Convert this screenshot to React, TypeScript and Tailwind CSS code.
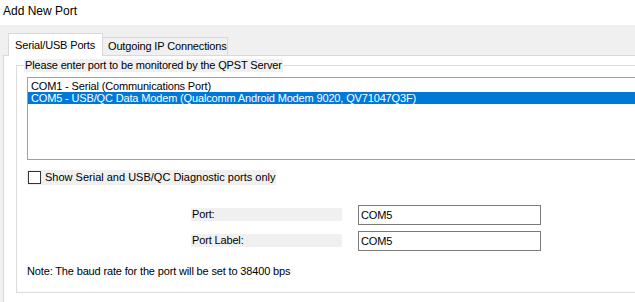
import React from "react";

export default function App() {
  const font = { fontFamily: '"Liberation Sans", Arial, sans-serif' };
  return (
    <div
      className="w-[635px] h-[302px] overflow-hidden bg-white flex flex-col text-black text-[11px] leading-[13px] tracking-[-0.15px]"
      style={font}
    >
      <div className="h-[25px] shrink-0 pl-[3px] pt-[4px] text-[12px] leading-[15px] tracking-normal">Add New Port</div>
      <div className="flex-1 bg-[#f0f0f0] pl-[3px] flex flex-col">
        <div className="h-[30px] shrink-0 flex items-end pl-[5px]">
          <div className="relative z-10 -mb-px h-[23px] w-[95px] bg-white border border-b-0 border-[#d9d9d9] pl-[6px] pt-[5px] whitespace-nowrap">
            Serial/USB Ports
          </div>
          <div className="h-[18px] w-[126px] -ml-px bg-[#f0f0f0] border border-b-0 border-[#d9d9d9] pl-[5px] pt-[2px] whitespace-nowrap">
            Outgoing IP Connections
          </div>
        </div>
        <div className="flex-1 bg-white border-l border-t border-[#d9d9d9] pl-[12px] pt-[9px]">
          <div className="relative w-[700px] border border-[#dcdcdc] pl-[10px] pt-[11px] pb-[14px]">
            <div className="absolute -top-[7px] left-[7px] bg-[#f0f0f0] pl-[1px] pr-[1px] leading-[13px] whitespace-nowrap">
              Please enter port to be monitored by the QPST Server
            </div>
            <div className="w-[640px] h-[83px] border border-[#a0a0a0] bg-white pt-[2px]">
              <div className="h-[12px] leading-[12px] pl-[3px] whitespace-nowrap">COM1 - Serial (Communications Port)</div>
              <div className="h-[12px] leading-[12px] pl-[3px] bg-[#0078d7] text-white whitespace-nowrap">
                COM5 - USB/QC Data Modem (Qualcomm Android Modem 9020, QV71047Q3F)
              </div>
            </div>
            <div className="mt-[10px] w-[249px] h-[15px] bg-[#f0f0f0] flex items-center">
              <div className="ml-[1px] w-[13px] h-[13px] border border-[#333333] bg-white shrink-0" />
              <span className="ml-[4px] leading-[13px] tracking-normal whitespace-nowrap">Show Serial and USB/QC Diagnostic ports only</span>
            </div>
            <div className="mt-[20px] ml-[164px] flex flex-col gap-[6px]">
              <div className="flex items-center h-[20px]">
                <div className="w-[151px] h-[13px] bg-[#f0f0f0] pl-[1px] leading-[13px] -mt-[1px]">Port:</div>
                <div className="ml-[16px] w-[183px] h-[20px] border border-[#7a7a7a] bg-white pl-[2px] pt-[3px] leading-[13px]">
                  COM5
                </div>
              </div>
              <div className="flex items-center h-[20px]">
                <div className="w-[151px] h-[13px] bg-[#f0f0f0] pl-[1px] leading-[13px] -mt-[1px]">Port Label:</div>
                <div className="ml-[16px] w-[183px] h-[20px] border border-[#7a7a7a] bg-white pl-[2px] pt-[3px] leading-[13px]">
                  COM5
                </div>
              </div>
            </div>
            <div className="mt-[14px] leading-[13px] whitespace-nowrap">Note: The baud rate for the port will be set to 38400 bps</div>
          </div>
        </div>
      </div>
    </div>
  );
}
